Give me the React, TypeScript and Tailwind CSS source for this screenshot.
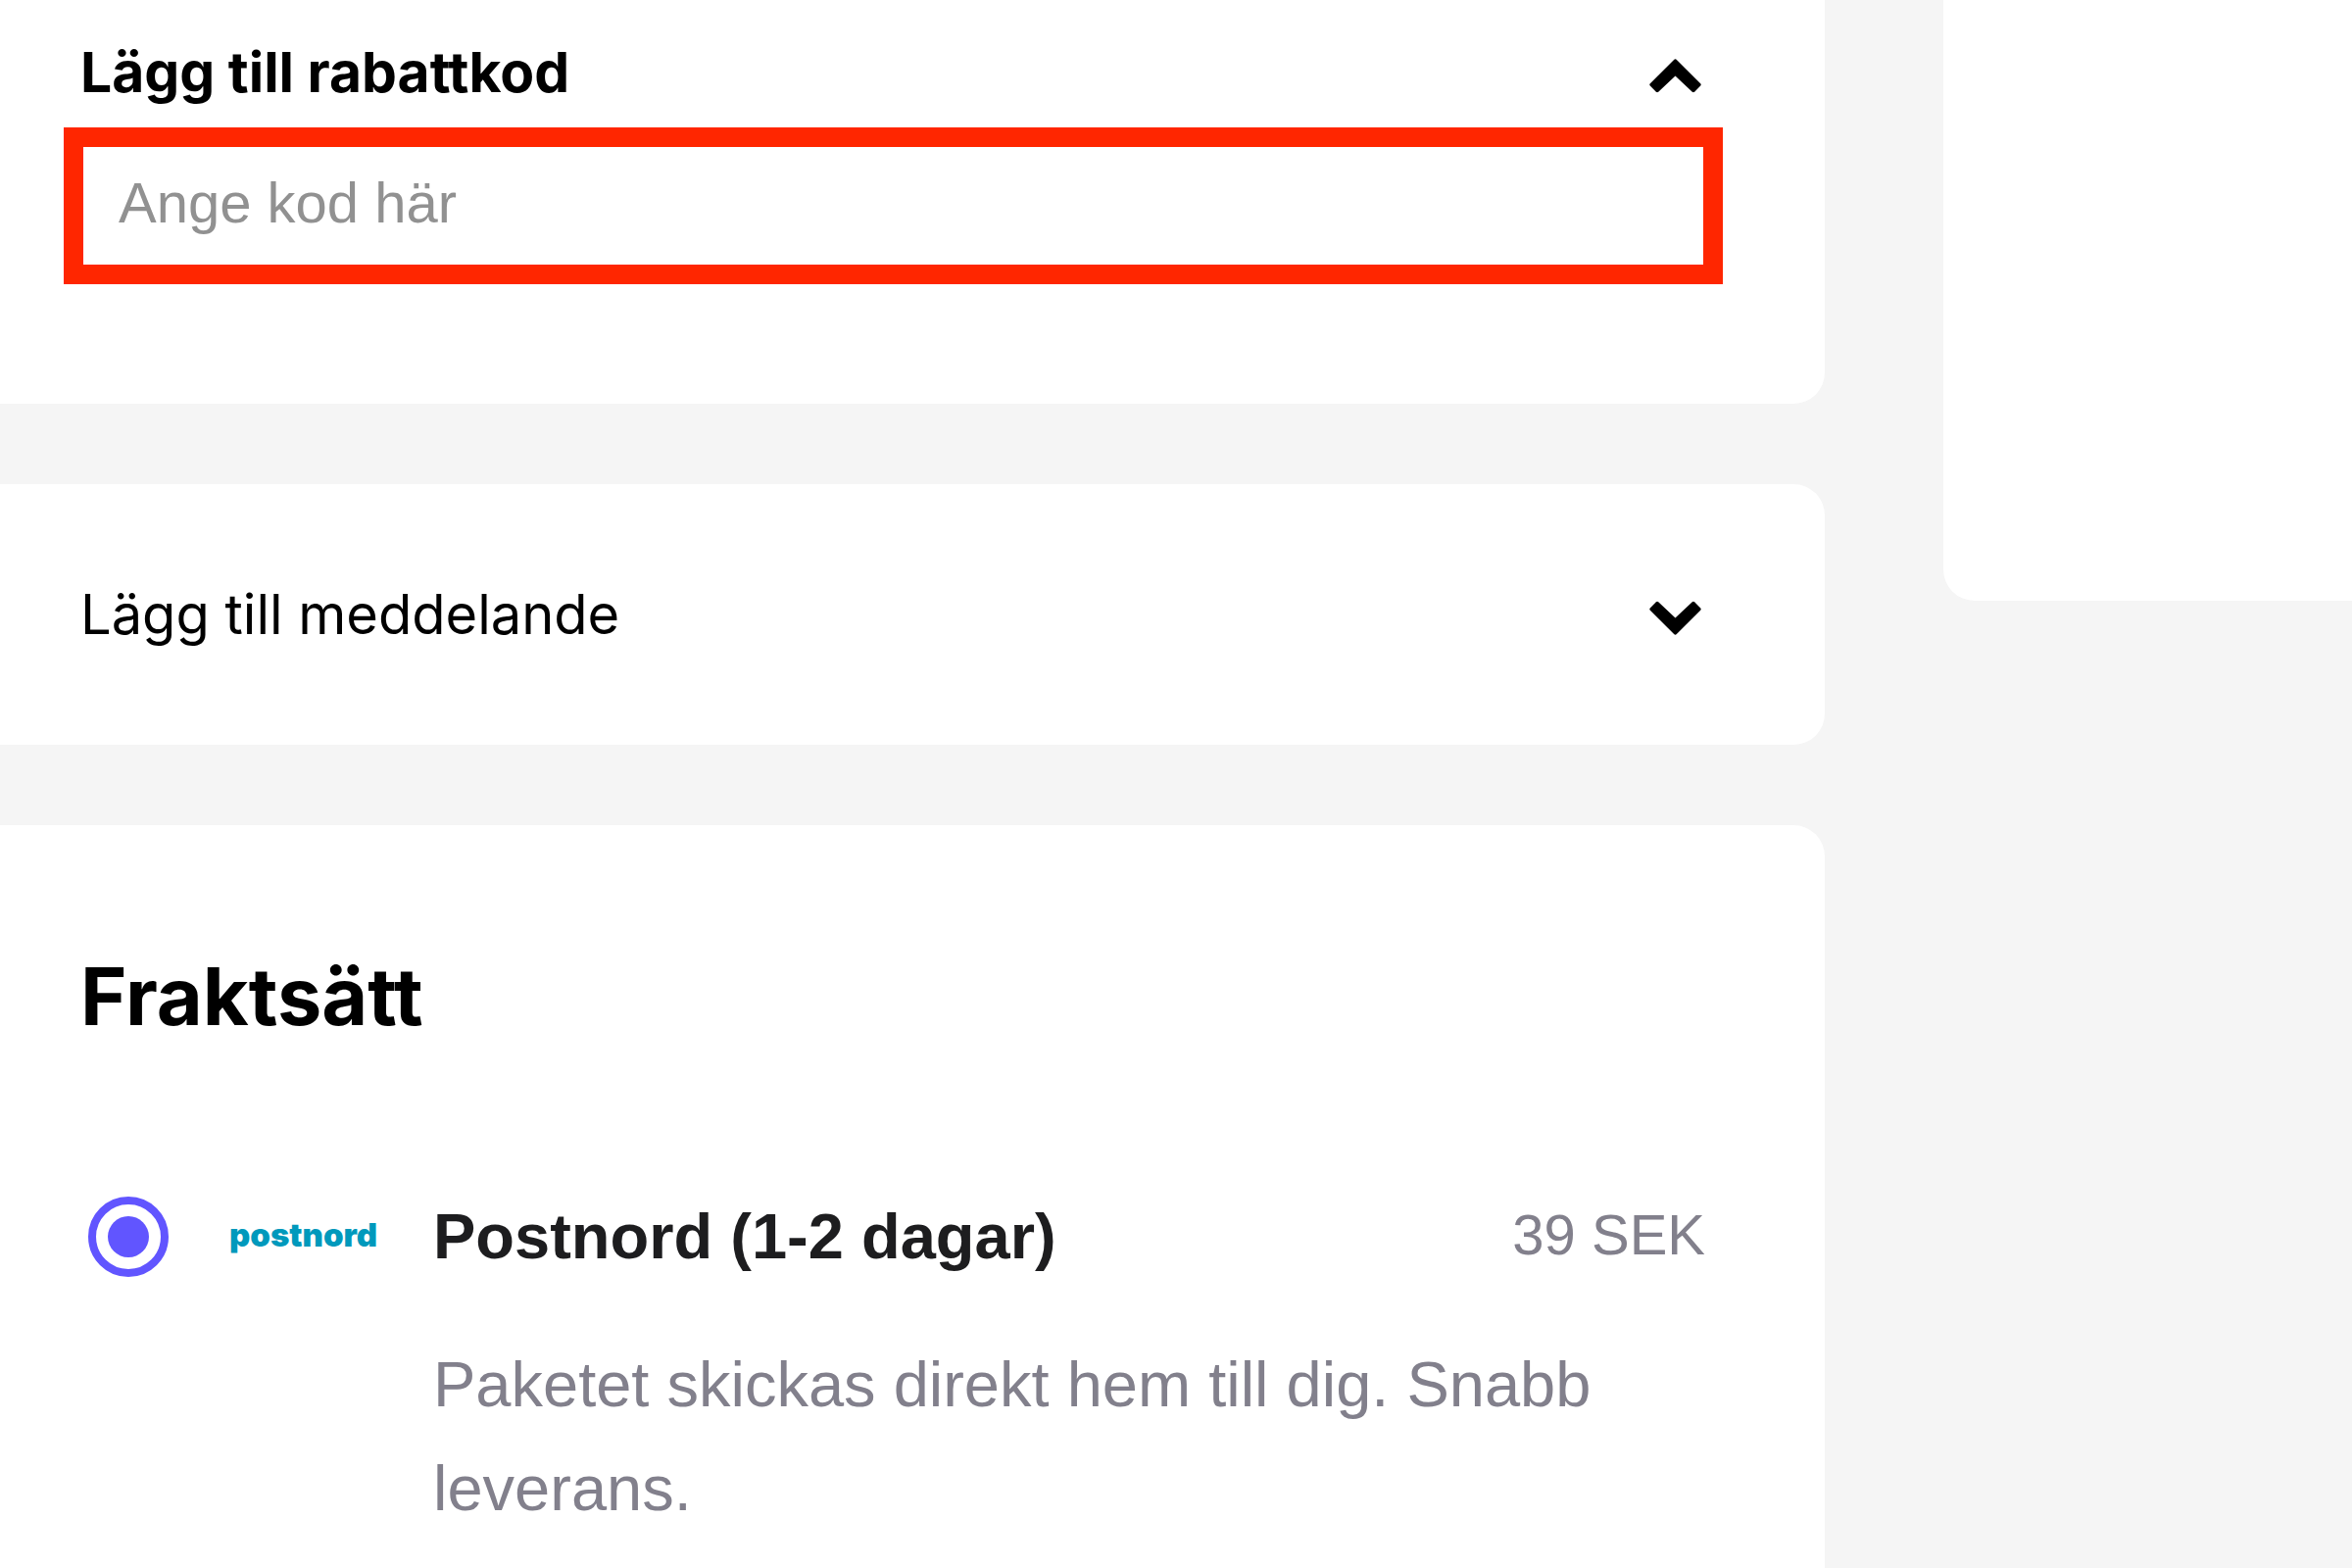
import { useState, type ReactNode } from "react";

type AccordionProps = {
  id: string;
  title: string;
  defaultOpen?: boolean;
  className: string;
  children: ReactNode;
};

function Chevron({ open }: { open: boolean }) {
  return (
    <svg viewBox="0 0 54 35" className={`w-[53px] h-[35px] shrink-0 ${open ? "" : "rotate-180"}`} aria-hidden="true">
      <path
        d="M25.6 .6Q27 -.6 28.4 .6L53.2 25.4Q54.2 26.6 53.2 27.8L47 34Q45.8 35 44.6 34L27 17.4 9.4 34Q8.2 35 7 34L.8 27.8Q-.2 26.6 .8 25.4Z"
        fill="currentColor"
      />
    </svg>
  );
}

function Accordion({ id, title, defaultOpen = false, className, children }: AccordionProps) {
  const [open, setOpen] = useState(defaultOpen);

  return (
    <section className={`bg-white pl-[65px] pr-[104px] ${className}`}>
      <h2>
        <button
          type="button"
          aria-expanded={open}
          aria-controls={id}
          onClick={() => setOpen(!open)}
          className={`flex w-full items-center justify-between pl-[17px] pr-[22px] text-left leading-[80px] text-black ${
            open ? "text-[57px] font-bold" : "text-[56px] font-normal"
          }`}
        >
          {title}
          <span className="pt-1.5">
            <Chevron open={open} />
          </span>
        </button>
      </h2>
      {open && <div id={id} className="mt-4">{children}</div>}
    </section>
  );
}

type ShippingOptionProps = {
  id: string;
  logo: ReactNode;
  title: string;
  price: string;
  description: string;
};

function ShippingOption({ id, logo, title, price, description }: ShippingOptionProps) {
  return (
    <div className="grid grid-cols-[82px_152px_minmax(0,1fr)_auto] items-center pl-2 font-['Liberation_Sans',Arial,sans-serif]">
      <input
        type="radio"
        id={id}
        name="shipping"
        defaultChecked
        className="size-[82px] appearance-none rounded-full border-8 border-[#6155ff] p-3 bg-clip-content checked:bg-[#6155ff]"
      />
      <div className="ml-[62px] w-[152px]">{logo}</div>
      <label htmlFor={id} className="ml-[118px] text-[65px] leading-[106px] font-bold text-[#1d1d1f]">
        {title}
      </label>
      <span className="pb-1 text-[58px] leading-[80px] text-[#82808c]">{price}</span>
      <p className="col-start-3 col-span-2 mt-[45px] ml-[118px] text-[65px] leading-[106px] text-[#82808c]">
        {description}
      </p>
    </div>
  );
}

function PostnordLogo() {
  return (
    <span className="block pb-1 font-[Inter,sans-serif] text-[33px] leading-[40px] font-black text-[#0099bc]">
      postnord
    </span>
  );
}

export default function App() {
  return (
    <div className="grid min-h-screen grid-cols-[minmax(0,1fr)_417px] gap-x-[121px] bg-[#f5f5f5] font-[Inter,sans-serif]">
      <main className="flex flex-col gap-[82px]">
        <Accordion id="discount" title="Lägg till rabattkod" defaultOpen className="rounded-br-[32px] pt-[34px] pb-[122px]">
          <input
            type="text"
            aria-label="Rabattkod"
            placeholder="Ange kod här"
            className="block h-[160px] w-full border-[20px] border-[#ff2600] bg-white px-9 pb-2 font-['Liberation_Sans',Arial,sans-serif] text-[58px] text-black outline-none placeholder:text-[#919191]"
          />
        </Accordion>

        <Accordion id="message" title="Lägg till meddelande" className="rounded-r-[32px] py-[93px]">
          <textarea
            aria-label="Meddelande"
            rows={3}
            className="block w-full border-2 border-gray-300 px-9 py-4 text-[58px]"
          />
        </Accordion>

        <section className="flex-1 rounded-tr-[32px] bg-white pt-[127px] pl-[82px] pr-[122px]">
          <h2 className="mb-36 text-[81px] leading-[96px] font-bold text-black">Fraktsätt</h2>
          <ShippingOption
            id="postnord"
            logo={<PostnordLogo />}
            title="Postnord (1-2 dagar)"
            price="39 SEK"
            description="Paketet skickas direkt hem till dig. Snabb leverans."
          />
        </section>
      </main>

      <aside className="h-[613px] rounded-bl-[32px] bg-white" />
    </div>
  );
}
